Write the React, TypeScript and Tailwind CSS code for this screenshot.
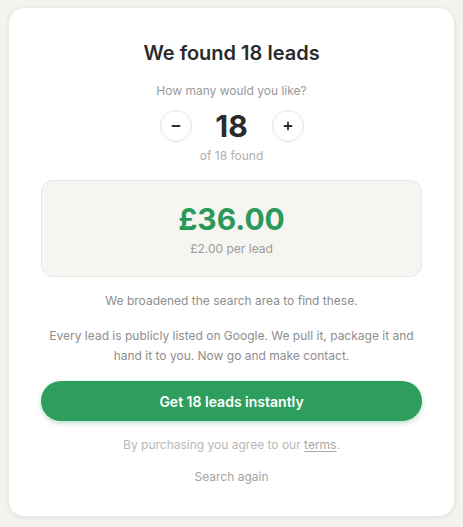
import { useState } from 'react';

const PRICE = 2;

export default function App() {
  const total = 18;
  const [count, setCount] = useState(18);

  return (
    <div
      className="min-h-[527px] bg-[#f5f3ef] px-2 pt-[7px] pb-[10px]"
      style={{ fontFamily: 'Inter, "Noto Sans", sans-serif' }}
    >
      <div className="rounded-[16px] border border-[#ece9e4] bg-white px-8 pt-[31px] pb-[29px] text-center shadow-[0_1px_5px_rgba(0,0,0,0.07)]">
        <h1 className="text-[20px] leading-7 font-semibold text-[#2b2b2b]">We found {total} leads</h1>

        <p className="mt-[14px] text-[12px] leading-5 text-[#9a9a9a]">How many would you like?</p>

        <div className="mt-[7px] flex items-center justify-center gap-4">
          <button
            onClick={() => setCount((c) => Math.max(1, c - 1))}
            className="grid h-8 w-8 place-items-center rounded-full border border-[#e6e4e0] bg-white text-[#2b2b2b]"
            aria-label="Fewer"
          >
            <svg width="10" height="10" viewBox="0 0 10 10">
              <path d="M1.5 5h7" stroke="currentColor" strokeWidth="2" strokeLinecap="round" />
            </svg>
          </button>
          <div className="w-12 text-[30px] leading-9 font-bold text-[#2b2b2b]">{count}</div>
          <button
            onClick={() => setCount((c) => Math.min(total, c + 1))}
            className="grid h-8 w-8 place-items-center rounded-full border border-[#e6e4e0] bg-white text-[#2b2b2b]"
            aria-label="More"
          >
            <svg width="10" height="10" viewBox="0 0 10 10">
              <path d="M1.5 5h7M5 1.5v7" stroke="currentColor" strokeWidth="1.8" strokeLinecap="round" />
            </svg>
          </button>
        </div>

        <p className="mt-0.5 text-[12px] leading-5 text-[#b0b0b0]">of {total} found</p>

        <div className="mt-[14px] rounded-[12px] border border-[#e9e7e2] bg-[#f6f5f2] pt-5 pb-[17px]">
          <div className="text-[30px] leading-9 font-bold text-[#2a9a5b]">£{(count * PRICE).toFixed(2)}</div>
          <div className="mt-0.5 text-[12px] leading-5 text-[#9a9a9a]">£{PRICE.toFixed(2)} per lead</div>
        </div>

        <p className="mt-[14px] text-[12px] leading-5 text-[#8e8e8e]">We broadened the search area to find these.</p>

        <p className="mt-[15px] text-[12px] leading-5 text-[#8e8e8e]">
          Every lead is publicly listed on Google. We pull it, package it and hand it to you. Now go and make contact.
        </p>

        <button className="mt-[15px] h-10 w-full rounded-full bg-[#2e9e5e] text-[14px] font-semibold text-white shadow-[0_2px_5px_rgba(46,158,94,0.35)]">
          Get {count} leads instantly
        </button>

        <p className="mt-[14px] text-[12px] leading-5 text-[#b8b8b8]">
          By purchasing you agree to our{' '}
          <a href="#" className="text-[#a8a8a8] underline underline-offset-2">
            terms
          </a>
          .
        </p>

        <button className="mt-3 text-[12px] leading-5 text-[#a3a3a3]">Search again</button>
      </div>
    </div>
  );
}
